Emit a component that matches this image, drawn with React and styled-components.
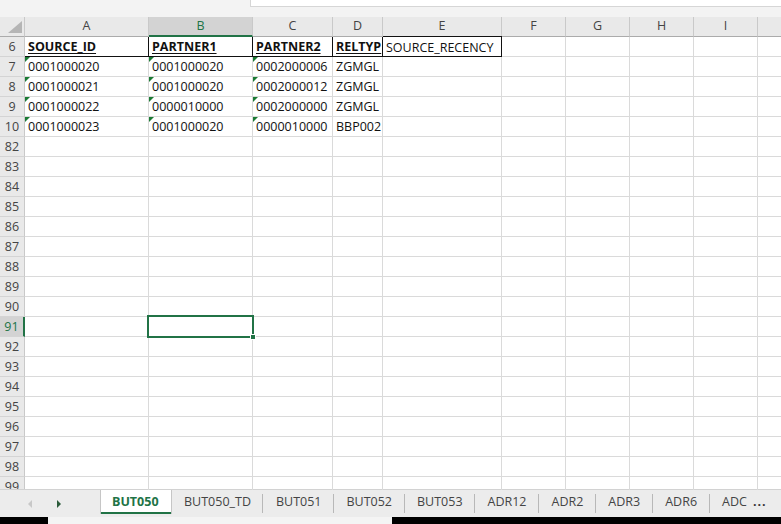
import React from 'react';
import styled, { createGlobalStyle, css } from 'styled-components';

const GlobalStyle = createGlobalStyle`
  html, body {
    margin: 0;
    padding: 0;
    background: #f3f3f3;
    overflow: hidden;
  }
  * {
    box-sizing: border-box;
  }
`;

const GREEN = '#217346';
const GRID = '#dadada';

const Page = styled.div`
  width: 781px;
  height: 524px;
  display: flex;
  flex-direction: column;
  font-family: 'Open Sans', 'Noto Sans', sans-serif;
  font-size: 12.5px;
  color: #222;
  overflow: hidden;
`;

const TopStrip = styled.div`
  height: 17px;
  flex: none;
  display: flex;
  align-items: flex-start;
  background: #f3f3f3;
`;

const FormulaEdge = styled.div`
  margin-left: 250px;
  flex: 1;
  height: 7px;
  background: #fff;
  border-left: 1px solid #d6d6d6;
  border-bottom: 1px solid #d6d6d6;
`;

const Sheet = styled.div`
  flex: 1;
  display: grid;
  grid-template-columns: 25px 124px 104px 80px 50px 119px 64px 64px 64px 64px 24px;
  grid-auto-rows: 20px;
  align-content: start;
  background: #fff;
  overflow: hidden;
`;

const Corner = styled.div`
  background: #e9e9e9;
  border-right: 1px solid #c9c9c9;
  border-bottom: 1px solid #ababab;
  display: flex;
  align-items: flex-end;
  justify-content: flex-end;
  padding: 0 2px 3px 0;
`;

const ColHead = styled.div`
  background: ${p => (p.active ? '#d3d3d3' : '#e9e9e9')};
  color: ${p => (p.active ? GREEN : '#444')};
  border-right: 1px solid #c9c9c9;
  border-bottom: ${p => (p.active ? `2px solid ${GREEN}` : '1px solid #ababab')};
  text-align: center;
  line-height: 18px;
`;

const RowHead = styled.div`
  background: ${p => (p.active ? '#d3d3d3' : '#e9e9e9')};
  color: ${p => (p.active ? GREEN : '#444')};
  border-right: ${p => (p.active ? `2px solid ${GREEN}` : '1px solid #c9c9c9')};
  border-bottom: 1px solid #d4d4d4;
  text-align: center;
  line-height: 19px;
`;

const Cell = styled.div`
  position: relative;
  border-right: 1px solid ${GRID};
  border-bottom: 1px solid ${GRID};
  padding-left: 3px;
  line-height: 19px;
  white-space: nowrap;
  overflow: visible;
  color: #111;

  ${p =>
    p.title &&
    css`
      font-weight: 700;
      text-decoration: underline;
      text-underline-offset: 2px;
      border-right-color: #111;
      border-bottom-color: #111;
    `}

  ${p =>
    p.boxed &&
    css`
      border: 1px solid #111;
      border-left: none;
      margin-top: -1px;
      height: 21px;
      line-height: 19px;
      padding-top: 1px;
    `}

  ${p =>
    p.flag &&
    css`
      &::before {
        content: '';
        position: absolute;
        left: 0;
        top: 0;
        border-top: 5px solid #1b7a34;
        border-right: 5px solid transparent;
      }
    `}

  ${p =>
    p.selected &&
    css`
      &::after {
        content: '';
        position: absolute;
        left: -2px;
        top: -2px;
        right: -2px;
        bottom: -2px;
        border: 2px solid ${GREEN};
        z-index: 2;
      }
    `}
`;

const Handle = styled.span`
  position: absolute;
  right: -4px;
  bottom: -4px;
  width: 6px;
  height: 6px;
  background: ${GREEN};
  border: 1px solid #fff;
  z-index: 3;
`;

const TabBar = styled.div`
  height: 28px;
  flex: none;
  display: flex;
  align-items: flex-start;
  background: #ececec;
  border-top: 1px solid #d2d2d2;
  margin-top: -1px;
  overflow: hidden;
`;

const Nav = styled.div`
  flex: none;
  width: 100px;
  height: 100%;
  display: flex;
  align-items: center;
  padding-left: 28px;
  gap: 25px;
`;

const Arrow = styled.span`
  width: 0;
  height: 0;
  border-top: 4px solid transparent;
  border-bottom: 4px solid transparent;
  ${p =>
    p.dir === 'left'
      ? css`
          border-right: 4px solid #c8c8c8;
        `
      : css`
          border-left: 4px solid #2b5b3a;
        `}
`;

const Tab = styled.div`
  position: relative;
  flex: none;
  height: 25px;
  margin-top: -1px;
  padding: 0 12.5px;
  display: flex;
  align-items: center;
  color: #444;
  white-space: nowrap;

  ${p =>
    p.active
      ? css`
          background: #fff;
          color: ${GREEN};
          font-weight: 700;
          padding: 0 12px 0 11px;
          border-left: 1px solid #c6c6c6;
          border-right: 1px solid #c6c6c6;
          box-shadow: inset 0 -2px 0 ${GREEN}, 0 -1px 0 #fff;
        `
      : css`
          &::after {
            content: '';
            position: absolute;
            right: 0;
            top: 5px;
            height: 19px;
            border-right: 1px solid #b8b8b8;
          }
        `}

  ${p =>
    p.last &&
    css`
      &::after {
        display: none;
      }
    `}
`;

const More = styled.span`
  margin-left: 6px;
  font-weight: 700;
  color: #333;
  letter-spacing: 1px;
`;

const BottomEdge = styled.div`
  height: 7px;
  flex: none;
  display: flex;
  background: #000;
`;

const ScrollTrack = styled.div`
  margin-left: 48px;
  width: 344px;
  background: #f4f4f4;
`;

const columns = ['A', 'B', 'C', 'D', 'E', 'F', 'G', 'H', 'I', ''];

const data = {
  7: ['0001000020', '0001000020', '0002000006', 'ZGMGL'],
  8: ['0001000021', '0001000020', '0002000012', 'ZGMGL'],
  9: ['0001000022', '0000010000', '0002000000', 'ZGMGL'],
  10: ['0001000023', '0001000020', '0000010000', 'BBP002'],
};

const titles = ['SOURCE_ID', 'PARTNER1', 'PARTNER2', 'RELTYP'];

const rowNums = [6, 7, 8, 9, 10];
for (let n = 82; n <= 99; n++) rowNums.push(n);

const tabs = ['BUT050', 'BUT050_TD', 'BUT051', 'BUT052', 'BUT053', 'ADR12', 'ADR2', 'ADR3', 'ADR6'];

const SELECTED_ROW = 91;
const SELECTED_COL = 1;

const renderRow = n => {
  const cells = [];
  columns.forEach((_, c) => {
    const key = `${n}-${c}`;
    if (n === 6 && c < 4) {
      cells.push(
        <Cell key={key} title>
          {titles[c]}
        </Cell>
      );
    } else if (n === 6 && c === 4) {
      cells.push(
        <Cell key={key} boxed>
          SOURCE_RECENCY
        </Cell>
      );
    } else if (data[n] && c < 4) {
      cells.push(
        <Cell key={key} flag={c < 3}>
          {data[n][c]}
        </Cell>
      );
    } else if (n === SELECTED_ROW && c === SELECTED_COL) {
      cells.push(
        <Cell key={key} selected>
          <Handle />
        </Cell>
      );
    } else {
      cells.push(<Cell key={key} />);
    }
  });
  return cells;
};

const App = () => (
  <Page>
    <GlobalStyle />
    <TopStrip>
      <FormulaEdge />
    </TopStrip>
    <Sheet>
      <Corner>
        <svg width="14" height="12" viewBox="0 0 14 12">
          <polygon points="14,0 14,12 0,12" fill="#b5b5b5" />
        </svg>
      </Corner>
      {columns.map((l, i) => (
        <ColHead key={`h${i}`} active={i === SELECTED_COL}>
          {l}
        </ColHead>
      ))}
      {rowNums.map(n => (
        <React.Fragment key={n}>
          <RowHead active={n === SELECTED_ROW}>{n}</RowHead>
          {renderRow(n)}
        </React.Fragment>
      ))}
    </Sheet>
    <TabBar>
      <Nav>
        <Arrow dir="left" />
        <Arrow dir="right" />
      </Nav>
      {tabs.map((t, i) => (
        <Tab key={t} active={i === 0}>
          {t}
        </Tab>
      ))}
      <Tab last>
        ADC<More>...</More>
      </Tab>
    </TabBar>
    <BottomEdge>
      <ScrollTrack />
    </BottomEdge>
  </Page>
);

export default App;
